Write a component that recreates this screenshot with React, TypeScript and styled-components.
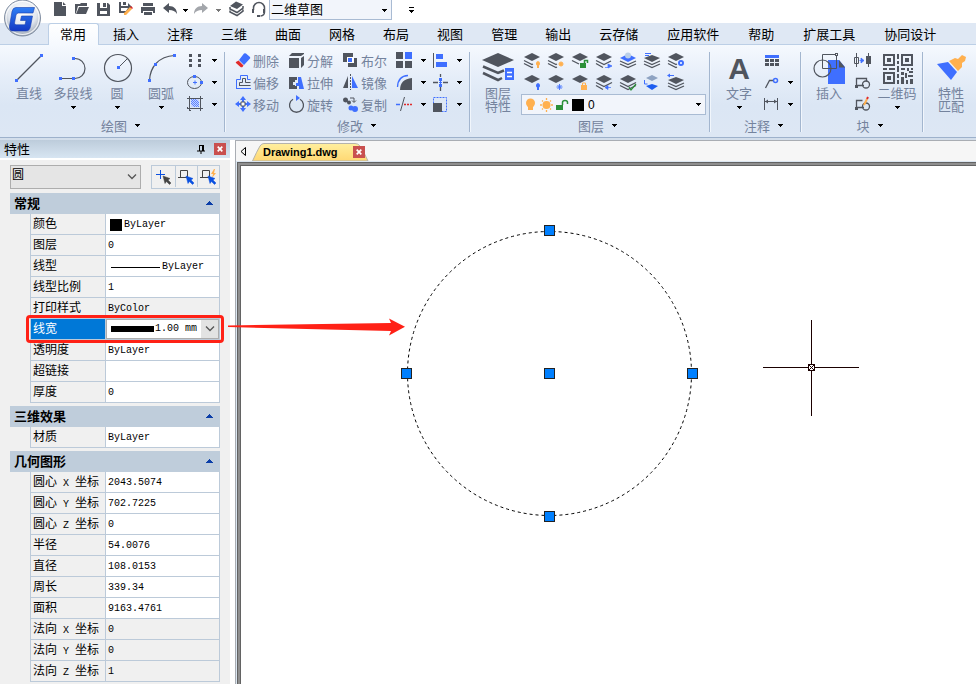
import React from "react";
import styled, { createGlobalStyle, css } from "styled-components";

const INK = "#50555e";
const BLUE = "#3f6fff";
const ORANGE = "#ffb04f";
const RED = "#e02b2b";
const GREEN = "#2b9038";
const CJK = `"Noto Sans CJK SC", sans-serif`;

const GlobalStyle = createGlobalStyle`
  * { box-sizing: border-box; }
  body { margin: 0; background: #fff; font-family: ${CJK}; font-size: 13px; color: #000; }
  button, select { font: inherit; color: inherit; margin: 0; padding: 0; }
  svg { display: block; flex: none; }
`;

/* ---------- page ---------- */

const Page = styled.div`
  display: flex;
  flex-direction: column;
  min-height: 100vh;
  position: relative;
  overflow: hidden;
`;

const PlainButton = styled.button`
  border: 0;
  background: none;
  display: flex;
  align-items: center;
  justify-content: center;
`;

const LogoButton = styled(PlainButton)`
  position: absolute;
  left: 2px;
  top: -2px;
  z-index: 2;
`;

/* ---------- quick access bar ---------- */

const QuickBar = styled.div`
  display: flex;
  align-items: flex-start;
  height: 23px;
  padding-left: 49px;
  background: #fff;
`;

const QuickButton = styled(PlainButton)<{ $w: number }>`
  width: ${(p) => p.$w}px;
  height: 20px;
`;

const Picker = styled.div<{ $w?: number }>`
  position: relative;
  display: flex;
  align-items: center;
  width: ${(p) => (p.$w ? `${p.$w}px` : "auto")};
`;

const PickerArrow = styled.span<{ $right: number }>`
  position: absolute;
  right: ${(p) => p.$right}px;
  top: 0;
  bottom: 0;
  display: flex;
  align-items: center;
  pointer-events: none;
`;

const WorkspaceSelect = styled.select`
  appearance: none;
  width: 100%;
  height: 20px;
  padding: 0 0 2px 1px;
  border: 1px solid #a9bbd3;
  border-top: 0;
  border-radius: 0;
  background: #f2f5fb;
  line-height: 17px;
`;

/* ---------- tabs ---------- */

const TabBar = styled.nav`
  display: flex;
  align-items: flex-end;
  height: 22px;
  padding-left: 46px;
  background: #dfe8f4;
  border-bottom: 1px solid #bccfe6;
`;

const Tab = styled.button<{ $active?: boolean; $wide?: boolean }>`
  flex: none;
  height: 21px;
  border: 0;
  background: none;
  padding: 0 ${(p) => (p.$wide ? 15 : 14)}px 0 14px;
  line-height: 20px;
  white-space: nowrap;
  ${(p) =>
    p.$active &&
    css`
      height: 22px;
      margin: 0 0 -1px 2px;
      padding: 0 12px 2px 11px;
      background: linear-gradient(#ffffff, #f5f9fe);
      border: 1px solid #bccfe6;
      border-bottom: 0;
      border-radius: 3px 3px 0 0;
      line-height: 18px;
    `}
`;

/* ---------- ribbon ---------- */

const Ribbon = styled.div`
  display: flex;
  align-items: stretch;
  padding-top: 4px;
  background: linear-gradient(#f5f9fe 0, #e6eef9 30px, #dbe6f4 60px, #dde7f4 100%);
  border-bottom: 1px solid #9db1cb;
  box-shadow: 0 2px 0 #d3deeb;
  margin-bottom: 2px;
`;

const Group = styled.section<{ $l: number; $r: number }>`
  flex: none;
  display: flex;
  flex-direction: column;
  padding: 0 ${(p) => p.$r}px 0 ${(p) => p.$l}px;
`;

const GroupBody = styled.div`
  display: flex;
  height: 66px;
`;

const GroupLabel = styled.button`
  display: flex;
  align-items: center;
  justify-content: center;
  gap: 8px;
  height: 22px;
  padding: 0 0 2px 13px;
  border: 0;
  background: none;
  color: #74839d;
  white-space: nowrap;
`;

const Separator = styled.div`
  flex: none;
  width: 2px;
  margin: 3px 0 5px;
  border-left: 1px solid #a3b6cf;
  border-right: 1px solid #f1f6fc;
`;

const Big = styled.button`
  width: 44px;
  height: 66px;
  border: 0;
  background: none;
  display: flex;
  flex-direction: column;
  align-items: center;
  color: #74839d;
`;

const BigLabel = styled.span<{ $wrap?: boolean }>`
  line-height: 13px;
  white-space: ${(p) => (p.$wrap ? "normal" : "nowrap")};
  max-width: ${(p) => (p.$wrap ? "2em" : "none")};
`;

const ArrowSlot = styled.span`
  display: flex;
  align-items: center;
  height: 17px;
`;

const Column = styled.div`
  display: flex;
  flex-direction: column;
`;

const Row = styled.div`
  display: flex;
  height: 22px;
`;

const Tool = styled(PlainButton)<{ $w: number }>`
  width: ${(p) => p.$w}px;
  height: 22px;
`;

const TextTool = styled.button`
  width: 54px;
  height: 22px;
  border: 0;
  background: none;
  display: flex;
  align-items: center;
  gap: 1px;
  color: #74839d;
  white-space: nowrap;
`;

const LayerBox = styled.div`
  position: relative;
  display: flex;
  align-items: center;
  height: 21px;
  margin: 1px 0 0 1px;
  width: 185px;
  padding-left: 3px;
  border: 1px solid #a9bbd3;
  background: #f2f5fb;
`;

const LayerSelect = styled.select`
  appearance: none;
  flex: 1;
  height: 19px;
  border: 0;
  background: none;
  font-family: "Liberation Sans", sans-serif;
  font-size: 12px;
`;

/* ---------- work area ---------- */

const Work = styled.div`
  flex: 1;
  display: flex;
`;

const Panel = styled.aside`
  position: relative;
  z-index: 1;
  flex: none;
  width: 230px;
  background: #f0f0f0;
`;

const PanelTitle = styled.header`
  display: flex;
  align-items: center;
  height: 18px;
  padding: 0 4px;
  background: linear-gradient(#bdccdb, #d7e5f2);
  box-shadow: 0 2px 0 #fff;
`;

const PanelName = styled.h2`
  flex: 1;
  margin: 0;
  font-size: 13px;
  font-weight: 400;
  line-height: 18px;
`;

const PinButton = styled(PlainButton)`
  width: 12px;
  height: 12px;
  margin-right: 7px;
`;

const CloseButton = styled(PlainButton)`
  width: 12px;
  height: 12px;
  background: #c9504f;
`;

const PanelTools = styled.div`
  display: flex;
  justify-content: space-between;
  padding: 7px 10px 4px;
`;

const ObjectSelect = styled.select`
  appearance: none;
  width: 100%;
  height: 24px;
  padding: 0 0 6px 1px;
  border: 1px solid #adadad;
  border-radius: 0;
  background: #e5e5e5;
  font-size: 12px;
  line-height: 16px;
`;

const ToolStrip = styled.div`
  display: flex;
  border: 1px solid #bccad9;
`;

const StripButton = styled(PlainButton)`
  width: 23px;
  height: 21px;
  & + & {
    border-left: 1px solid #bccad9;
    width: 22px;
  }
`;

const Section = styled.section`
  margin: 0 10px 3px;
`;

const SectionHead = styled.button`
  display: flex;
  align-items: center;
  justify-content: space-between;
  width: 100%;
  height: 21px;
  padding: 0 7px 2px 4px;
  border: 0;
  background: #bfcddb;
  font-weight: 700;
`;

const Grid = styled.table`
  width: calc(100% - 20px);
  margin-left: 20px;
  border-collapse: separate;
  border-spacing: 0;
  table-layout: fixed;
  font-size: 12px;
  line-height: 18px;
`;

const Name = styled.th<{ $selected?: boolean }>`
  position: relative;
  width: 76px;
  height: 21px;
  padding: 0 0 2px 2px;
  border: solid #bccad9;
  border-width: 0 1px 1px;
  text-align: left;
  font-weight: 400;
  white-space: nowrap;
  color: ${(p) => (p.$selected ? "#fff" : "#000")};
  background: ${(p) => (p.$selected ? "#0078d7" : "#f0f0f0")};
`;

const Axis = styled.span`
  font: 10px "Liberation Mono", monospace;
  white-space: pre;
`;

const Value = styled.td<{ $muted?: boolean; $flush?: boolean }>`
  height: 21px;
  padding: ${(p) => (p.$flush ? "0" : "2px 0 0 2px")};
  border: solid #bccad9;
  border-width: 0 1px 1px 0;
  background: ${(p) => (p.$muted ? "#f0f0f0" : "#fff")};
  font-family: "Liberation Mono", monospace;
  font-size: 10px;
`;

const Sample = styled.span`
  display: flex;
  align-items: center;
  gap: 2px;
  height: 18px;
`;

const Swatch = styled.span`
  width: 12px;
  height: 12px;
  margin-left: 2px;
  background: #000;
`;

const ThinLine = styled.span`
  width: 49px;
  height: 1px;
  margin-left: 3px;
  background: #000;
`;

const WeightBox = styled.div`
  position: relative;
  display: flex;
  align-items: center;
  height: 20px;
  padding-left: 4px;
  border: 1px solid #adadad;
  background: linear-gradient(to right, #fff 94px, #e3e3e3 94px);
`;

const WeightBar = styled.span`
  width: 43px;
  height: 6px;
  background: #000;
`;

const WeightSelect = styled.select`
  appearance: none;
  flex: 1;
  min-width: 0;
  height: 18px;
  padding-left: 1px;
  border: 0;
  background: none;
`;

const Callout = styled.span`
  position: absolute;
  left: -5px;
  top: -4px;
  width: 198px;
  height: 28px;
  border: 3px solid #ff2116;
  border-radius: 4px;
  pointer-events: none;
  z-index: 1;
`;

const CalloutArrow = styled.svg`
  position: absolute;
  left: 197px;
  top: -2px;
  pointer-events: none;
`;

/* ---------- document ---------- */

const Doc = styled.main`
  flex: 1;
  min-width: 0;
  display: flex;
  flex-direction: column;
  margin-left: 5px;
  border: solid #a9adb3;
  border-width: 1px 0 0 1px;
  background: #dbe6f1;
`;

const DocTabs = styled.div`
  display: flex;
  align-items: flex-end;
  height: 20px;
  padding-left: 2px;
  background: #f6f6f6;
`;

const DocTab = styled.div`
  position: relative;
  display: flex;
  align-items: center;
  width: 117px;
  height: 18px;
  margin-left: 4px;
  padding: 0 4px 0 11px;
`;

const DocTabShape = styled.svg`
  position: absolute;
  inset: 0;
`;

const DocName = styled.button`
  position: relative;
  flex: 1;
  padding-bottom: 1px;
  border: 0;
  background: none;
  text-align: left;
  font-family: "Liberation Sans", sans-serif;
  font-size: 11px;
  font-weight: 700;
`;

const DocClose = styled(CloseButton)`
  position: relative;
`;

const CanvasFrame = styled.div`
  flex: 1;
  display: flex;
  margin: 1px 0 0 1px;
  border: solid #636363;
  border-width: 1px 0 0 1px;
  box-shadow: inset 2px 2px 0 #8f8f8f, inset 3px 3px 0 #636363;
  padding: 3px 0 0 3px;
`;

const Canvas = styled.div`
  flex: 1;
  position: relative;
  overflow: hidden;
  background: #fff;
`;

const Drawing = styled.svg`
  position: absolute;
  left: 0;
  top: 0;
`;

/* ---------- shared glyphs ---------- */

const Caret = ({ color = "#000" }: { color?: string }) => (
  <svg width="5" height="3" viewBox="0 0 5 3">
    <path d="M0 0h5v1H4v1H3v1H2V2H1V1H0z" fill={color} />
  </svg>
);

const Chevron = () => (
  <svg width="10" height="6" viewBox="0 0 10 6">
    <path d="M1 .5l4 4 4-4" fill="none" stroke="#555" strokeWidth="1.3" />
  </svg>
);

const Cross = () => (
  <svg width="6" height="6" viewBox="0 0 6 6">
    <path d="M.7.7l4.6 4.6M5.3.7L.7 5.3" stroke="#fff" strokeWidth="1.7" />
  </svg>
);

const Sq = ({ x, y }: { x: number; y: number }) => <rect x={x - 1.5} y={y - 1.5} width="3" height="3" fill={BLUE} stroke="none" />;

const Art = ({ w, h, children }: { w: number; h: number; children: React.ReactNode }) => (
  <svg width={w} height={h} viewBox={`0 0 ${w} ${h}`} fill="none" stroke={INK} aria-hidden="true">
    {children}
  </svg>
);

const Logo = () => (
  <svg width="40" height="40" viewBox="0 0 40 40">
    <defs>
      <radialGradient id="ball" cx="50%" cy="35%" r="65%">
        <stop offset="0" stopColor="#fff" />
        <stop offset="0.6" stopColor="#e3e8ef" />
        <stop offset="1" stopColor="#98a3b3" />
      </radialGradient>
      <linearGradient id="gee" x1="0" y1="0" x2="0" y2="1">
        <stop offset="0" stopColor="#2f7ff5" />
        <stop offset="1" stopColor="#1439c4" />
      </linearGradient>
    </defs>
    <circle cx="20.5" cy="20" r="18" fill="url(#ball)" stroke="#8390a3" />
    <circle cx="20.5" cy="20" r="16.5" fill="none" stroke="#fff" strokeWidth="1.2" opacity="0.8" />
    <path
      d="M14 9.500H32.500L31 15H16.500Q14.500 15 14 17L12.500 25Q12.500 26.800 14 26.800H23L24 22.500H18.500L19.500 18H30.500L28.500 28.500Q27.500 33 24 33H10.500Q7 33 7.500 28L10 13.500Q11 9.500 14 9.500Z"
      fill="url(#gee)"
      stroke="#1a3fae"
      strokeWidth="0.6"
    />
  </svg>
);

/* ---------- quick access glyphs (20 x 20) ---------- */

const stack = (
  <>
    <path d="M4 6l6-4.500 7 3-6 4.500z" fill={INK} stroke="none" />
    <path d="M4 7v2l7 3.500 6-4.500v-2M4 10.500v1.500l7 3.500 6-4.500v-1.500" strokeWidth="1.500" />
  </>
);

const quick: [string, number, React.ReactNode][] = [
  ["新建", 22, <path d="M4 2h8v4h4v10H4zM13 2l3 3h-3z" fill={INK} stroke="none" />],
  [
    "打开",
    22,
    <g fill={INK} stroke="none">
      <path d="M3 14V4h5l1-1h6v3H6L4 13z" />
      <path d="M7 7h10l-3 7H4z" />
    </g>,
  ],
  ["保存", 22, <path d="M3 3h3v5h7V3h1l2 2v11H3zM9 3h3v4H9zM6 11v3h7v-3z" fill={INK} fillRule="evenodd" stroke="none" />],
  [
    "另存为",
    22,
    <g stroke="none">
      <path d="M3 2h2v4h7V3l4 4-6 6H3zM7 2h3v3H7zM5 8v3h5l2-3z" fill={INK} fillRule="evenodd" />
      <path d="M8 13l6-6 2 2-6 6H8z" fill={ORANGE} />
      <path d="M14 7l1-1 2 2-1 1z" fill={RED} />
    </g>,
  ],
  ["打印", 22, <path d="M5 3h10v3H5zM3 7h14v6h-2v-2H5v2H3zM6 12h8v3H6z" fill={INK} stroke="none" />],
  ["撤销", 22, <path d="M3 8l6-5v3c5 0 8 3 8 8-2-3-4-4-8-4v3z" fill={INK} stroke="none" />],
];

/* ---------- small ribbon glyphs ---------- */

const drawTools: [string, React.ReactNode][] = [
  [
    "点",
    <path d="M6 5h3v3H6zM15 5h3v3h-3zM6 10h3v3H6zM15 10h3v3h-3zM6 15h3v3H6zM15 15h3v3h-3z" fill={INK} stroke="none" />,
  ],
  [
    "椭圆",
    <>
      <ellipse cx="11.500" cy="11.500" rx="7" ry="6" />
      <path d="M10 11.500h4M12 9.500v4" stroke={BLUE} />
      <Sq x={11.5} y={5.5} />
      <Sq x={18.5} y={11.5} />
    </>,
  ],
  [
    "填充",
    <>
      <rect x="8" y="6" width="8" height="8" fill="#c5d3ff" stroke="none" />
      <path d="M8 10l4 4M8 6l8 8M12 6l4 4M8 8l6 6M10 6l6 6" stroke={BLUE} strokeWidth="0.8" />
      <path d="M6.500 3v15M17.500 3v15M4 5.500h16M4 15.500h16M4 14l4 4" />
    </>,
  ],
];

const modify: [string, React.ReactNode][][] = [
  [
    [
      "删除",
      <g stroke="none">
        <path d="M12 4.500Q13 4 14 4.500L18 8Q18.500 9 18 9.500L12 16 7 11z" fill={BLUE} />
        <path d="M6.500 11.500l5 5-1 1.500Q9.500 18.500 8.500 18L4 14Q3.500 13.500 4 13z" fill={RED} />
      </g>,
    ],
    [
      "偏移",
      <>
        <path d="M4 17.500h15M4.500 17.500V8.500h4v-4h7v4h3" stroke={BLUE} />
        <path d="M7 14.500h11.500M7.500 14.500v-3h3v-4h3v4h5" />
      </>,
    ],
    [
      "移动",
      <g stroke="none">
        <path d="M11 3l3 4h-2v3h-2V7H8zM11 19l-3-4h2v-3h2v3h2zM3 11l4-3v2h3v2H7v2zM19 11l-4 3v-2h-3v-2h3V8z" fill={BLUE} />
        <path d="M9 9h4v4H9z" fill="#fff" stroke={INK} />
      </g>,
    ],
  ],
  [
    [
      "分解",
      <path d="M3 7l3-3h12v1l-3 2zM3 9h10v10H3zM15 9l3-2v9l-3 3z" fill={INK} stroke="none" />,
    ],
    [
      "拉伸",
      <g stroke="none">
        <path d="M3 6h8v3H9v2H7v3h2v1h2v3H3z" fill={INK} />
        <path d="M12 6h3l3 12h-5v-3h-3v-3h2z" fill={BLUE} />
      </g>,
    ],
    [
      "旋转",
      <>
        <path d="M7 6.200a7 7 0 1 0 7 0" strokeWidth="1.300" />
        <path d="M10 2l4 3-4 3z" fill={BLUE} stroke="none" />
      </>,
    ],
  ],
  [
    [
      "布尔",
      <g stroke="none">
        <path d="M3 4h10v9H3zM8 9h9v9H8z" fill={INK} />
        <path d="M7 8h7v6H7z" fill="#fff" />
        <path d="M8 9h4v4H8z" fill={BLUE} />
      </g>,
    ],
    [
      "镜像",
      <g>
        <path d="M8 5v12H3z" fill={INK} stroke="none" />
        <path d="M12 5v12h6z" fill={BLUE} stroke="none" />
        <path d="M10.500 3v16" strokeDasharray="2 1" />
      </g>,
    ],
    [
      "复制",
      <g>
        <path d="M5.500 4.500a2.500 2.500 0 1 1 0 5 2.500 2.500 0 0 1 0-5zM9 7.500a2 2 0 1 1 0 4 2 2 0 0 1 0-4z" fill={INK} stroke="none" />
        <path d="M10 5h4v4M12 7.500l2 2 2-2" />
        <path d="M11 12.500a2.500 2.500 0 1 1 0 5 2.500 2.500 0 0 1 0-5zM15 13a3 3 0 1 1 0 6 3 3 0 0 1 0-6z" fill={BLUE} stroke="none" />
      </g>,
    ],
  ],
];

const modifyExtra: [string, React.ReactNode][][] = [
  [
    [
      "阵列",
      <g stroke="none">
        <path d="M2 3h7v7H2zM2 12h7v7H2zM11 12h7v7h-7z" fill={INK} />
        <path d="M11 3h7v7h-7z" fill={BLUE} />
      </g>,
    ],
    [
      "圆角",
      <>
        <path d="M18 7v12H6Q6 8 18 7z" fill={INK} stroke="none" />
        <path d="M3.500 16Q4 5 14 4.500" stroke={BLUE} strokeWidth="1.300" />
      </>,
    ],
    [
      "修剪",
      <>
        <path d="M10.500 4L6.500 18" />
        <path d="M2 11.500h4" stroke={BLUE} strokeWidth="1.500" />
        <path d="M10 11.500h9" stroke={RED} strokeWidth="1.500" strokeDasharray="2 1" />
      </>,
    ],
  ],
  [
    [
      "对齐",
      <g stroke="none">
        <path d="M2 4h1v15H2z" fill={INK} />
        <path d="M5 5h7v5H5zM5 13h11v5H5z" fill={BLUE} />
      </g>,
    ],
    [
      "打断",
      <>
        <path d="M9.500 3v3M9.500 16v4M2 11.500h5M12 11.500h5" strokeWidth="1.300" />
        <path d="M9.500 7v3M9.500 13v3" strokeWidth="3" stroke={BLUE} />
        <path d="M8 11.500h3M9.500 10v3" stroke={BLUE} />
      </>,
    ],
    [
      "缩放",
      <>
        <path d="M2.500 4.500h13v14h-13z" stroke={BLUE} strokeDasharray="2 1" />
        <path d="M2 10h9v9H2z" fill={INK} stroke="none" />
      </>,
    ],
  ],
];

/* ---------- layer glyphs (24 x 22) ---------- */

const diamond = <path d="M4 8l8-4 8 4-8 4z" fill={INK} stroke="none" />;
const fullStack = (
  <>
    {diamond}
    <path d="M4 11.500l8 4 8-4M4 14.500l8 4 8-4" strokeWidth="1.300" />
  </>
);
const halfStack = (
  <>
    {diamond}
    <path d="M4 11.500l8 4 1-.5M4 14.500l8 4 1-.5" strokeWidth="1.300" />
  </>
);
const Bulb = ({ c }: { c: string }) => <path d="M18 12a2.500 2.500 0 0 1 1 4.500V19h-2v-2.500a2.500 2.500 0 0 1 1-4.500z" fill={c} stroke="none" />;

const layerTools: [string, React.ReactNode][] = [
  ["图层关闭", <>{halfStack}<Bulb c={ORANGE} /></>],
  [
    "图层冻结",
    <>
      {halfStack}
      <circle cx="17" cy="15" r="2" fill={ORANGE} stroke="none" />
      <path d="M17 12v6M14 15h6M15 13l4 4M19 13l-4 4" stroke={ORANGE} strokeWidth="0.700" />
    </>,
  ],
  [
    "图层解锁",
    <>
      {diamond}
      <path d="M12 14h6v5h-6z" fill={GREEN} stroke="none" />
      <path d="M4 11.500l7 3.500" strokeWidth="1.300" />
      <path d="M16.500 14v-2.500h3V14" stroke={GREEN} strokeWidth="1.500" />
    </>,
  ],
  [
    "图层转换",
    <>
      {diamond}
      <path d="M4 11.500l8 4 7-3.500M4 14.500l7 4" strokeWidth="1.300" />
      <path d="M13 18.500h3M16 15l4 2-4 2z" fill={BLUE} stroke={BLUE} strokeWidth="0.700" />
    </>,
  ],
  [
    "图层隔离",
    <>
      <path d="M4 9l8-4 8 4-8 4z" fill={BLUE} stroke="none" />
      <circle cx="12" cy="6.500" r="3" fill="#b9cfe9" stroke="none" />
      <path d="M4 12l8 3.500 8-3.500M4 15l8 3.500 8-3.500" strokeWidth="1.300" />
    </>,
  ],
  [
    "图层合并",
    <>
      <path d="M4 9l8-3 8 3-8 4z" fill={INK} stroke="none" />
      <path d="M4 12l8 3.500 8-3.500M4 15l8 3.500 8-3.500" strokeWidth="1.300" />
      <path d="M5 4.500h6M5 6.500h4" stroke={BLUE} />
    </>,
  ],
  [
    "图层设置",
    <>
      {halfStack}
      <circle cx="17" cy="14" r="2" stroke={BLUE} strokeWidth="2" fill="#fff" />
    </>,
  ],
  ["打开图层", <>{diamond}<Bulb c={BLUE} /></>],
  ["解冻图层", <>{diamond}<path d="M15.500 13v6M12.500 16h6M13.500 14l4 4M17.500 14l-4 4" stroke={BLUE} strokeWidth="0.900" /></>],
  [
    "锁定图层",
    <>
      {diamond}
      <path d="M13 14h6v5h-6z" fill={ORANGE} stroke="none" />
      <path d="M14.500 14v-2h3v2" stroke={ORANGE} />
    </>,
  ],
  [
    "上一图层",
    <>
      {diamond}
      <path d="M4 11.500l8 4 8-4M4 14.500l7 4" strokeWidth="1.300" />
      <path d="M19 16.500h-4M16 14.500l-3 2 3 2z" fill={BLUE} stroke={BLUE} strokeWidth="0.700" />
    </>,
  ],
  [
    "图层匹配",
    <>
      {fullStack}
      <path d="M13 16l2 3 5-6" stroke={GREEN} strokeWidth="1.300" />
    </>,
  ],
  [
    "移至图层",
    <>
      <path d="M6 7l6-3 6 3-6 3z" fill="#8ea3c2" stroke="none" />
      <path d="M6 15l6-2 6 2-6 4z" fill="#1d5df0" stroke="none" />
      <path d="M4.500 9v4h3" stroke={BLUE} />
    </>,
  ],
  [
    "删除图层",
    <>
      <path d="M4 9l8-3 8 3-8 4z" fill={INK} stroke="none" />
      <path d="M4 12l8 3.500 8-3.500M4 15l8 3.500 8-3.500" strokeWidth="1.300" />
      <path d="M4 4.500h6" stroke={BLUE} />
      <path d="M6 2.500l-3 2 3 2z" fill={BLUE} stroke="none" />
    </>,
  ],
];

const noteTools: [string, React.ReactNode, boolean][] = [
  [
    "表格",
    <g stroke="none">
      <path d="M4 6h14v3H4z" fill={BLUE} />
      <path d="M4 10h4v3H4zM9 10h4v3H9zM14 10h4v3h-4zM4 14h4v3H4zM9 14h4v3H9zM14 14h4v3h-4z" fill={INK} />
    </g>,
    false,
  ],
  [
    "引线",
    <>
      <path d="M4.500 17L8.500 9.500H13" strokeWidth="1.300" />
      <circle cx="14.500" cy="9.500" r="2" stroke={BLUE} strokeWidth="1.500" />
    </>,
    true,
  ],
  [
    "标注",
    <>
      <path d="M3.500 5v12M16.500 5v12M4 8.500h12" />
      <path d="M7 6.500v4l-3-2zM13 6.500v4l3-2z" fill={INK} stroke="none" />
    </>,
    true,
  ],
];

const blockTools: [string, React.ReactNode][] = [
  [
    "属性",
    <>
      <path d="M5.500 4v14M17.500 4v14" />
      <path d="M3.500 8.500h4v6h-4z" />
      <path d="M15 7h5v8h-5z" fill={INK} stroke="none" />
      <path d="M8.500 11.500h4M10 9l3 2.500-3 2.500z" stroke={BLUE} strokeWidth="0.800" fill={BLUE} />
    </>,
  ],
  [
    "创建块",
    <>
      <path d="M13 14.500H5.500v-7h10v3" strokeWidth="1.300" />
      <circle cx="15" cy="13.500" r="3.500" strokeWidth="1.300" />
      <path d="M4 14h3v3H4z" fill={INK} stroke="none" />
    </>,
  ],
  [
    "编辑块",
    <>
      <path d="M13 14.500H5.500v-7h6" strokeWidth="1.300" />
      <circle cx="15" cy="13.500" r="3.500" strokeWidth="1.300" />
      <path d="M4 14h3v3H4z" fill={INK} stroke="none" />
      <path d="M13 12l3-6" stroke={ORANGE} strokeWidth="2" />
      <path d="M16 6l1-2" stroke={RED} strokeWidth="2" />
    </>,
  ],
];

/* ---------- large ribbon tools ---------- */

type BigToolProps = { label: string; wrap?: boolean; arrow?: boolean; children: React.ReactNode };

const BigTool = ({ label, wrap, arrow, children }: BigToolProps) => (
  <Big>
    <Art w={44} h={37}>
      {children}
    </Art>
    <BigLabel $wrap={wrap}>{label}</BigLabel>
    {arrow && (
      <ArrowSlot>
        <Caret />
      </ArrowSlot>
    )}
  </Big>
);

const Finder = ({ x, y }: { x: number; y: number }) => (
  <g>
    <rect x={x + 1} y={y + 1} width="10" height="10" strokeWidth="2" />
    <rect x={x + 4} y={y + 4} width="4" height="4" fill={INK} stroke="none" />
  </g>
);

const Draw = () => (
  <Group $l={7} $r={3}>
    <GroupBody>
      <BigTool label="直线">
        <path d="M9.500 31.500l25-25" strokeWidth="1.200" />
        <Sq x={9.5} y={31.5} />
        <Sq x={34.5} y={6.5} />
      </BigTool>
      <BigTool label="多段线" arrow>
        <path d="M9.500 29.500H24a10 10 0 0 0 0-20h-1.500" strokeWidth="1.200" />
        <Sq x={9.5} y={29.5} />
        <Sq x={22.5} y={29.5} />
        <Sq x={22.5} y={9.5} />
      </BigTool>
      <BigTool label="圆" arrow>
        <circle cx="23" cy="19" r="13.500" strokeWidth="1.200" />
        <path d="M23 19l9-9" />
        <Sq x={23.5} y={18.5} />
      </BigTool>
      <BigTool label="圆弧" arrow>
        <path d="M10.500 31.500Q11 21 17 14.500 24 7 35.500 6.500" strokeWidth="1.200" />
        <Sq x={10.5} y={31.5} />
        <Sq x={16.5} y={15.5} />
        <Sq x={35.5} y={6.5} />
      </BigTool>
      <Column>
        {drawTools.map(([name, art]) => (
          <Row key={name}>
            <Tool $w={24} aria-label={name}>
              <Art w={24} h={22}>{art}</Art>
            </Tool>
            <Tool $w={14} aria-label={`${name}选项`}>
              <Caret />
            </Tool>
          </Row>
        ))}
      </Column>
    </GroupBody>
    <GroupLabel>绘图<Caret /></GroupLabel>
  </Group>
);

const Modify = () => (
  <Group $l={6} $r={1}>
    <GroupBody>
      {modify.map((col, i) => (
        <Column key={i}>
          {col.map(([name, art]) => (
            <TextTool key={name}>
              <Art w={20} h={22}>{art}</Art>
              {name}
            </TextTool>
          ))}
        </Column>
      ))}
      {modifyExtra.map((col, i) => (
        <Column key={i}>
          {col.map(([name, art]) => (
            <Row key={name}>
              <Tool $w={i === 0 ? 20 : 18} aria-label={name}>
                <Art w={20} h={22}>{art}</Art>
              </Tool>
              <Tool $w={18} aria-label={`${name}选项`}>
                <Caret />
              </Tool>
            </Row>
          ))}
        </Column>
      ))}
    </GroupBody>
    <GroupLabel>修改<Caret /></GroupLabel>
  </Group>
);

const Layers = () => (
  <Group $l={5} $r={3}>
    <GroupBody>
      <BigTool label="图层特性" wrap>
        <path d="M6 11l16-7 16 7-16 7z" fill={INK} stroke="none" />
        <path d="M7 17.500l15 6.500 6-2.500M7 24l15 7 4-2" strokeWidth="2.500" />
        <path d="M29 19h9v12h-9z" fill={BLUE} stroke="none" />
        <path d="M31 23.500h5M31 27.500h5" stroke="#fff" strokeWidth="1.500" />
      </BigTool>
      <Column>
        {[layerTools.slice(0, 7), layerTools.slice(7)].map((row, i) => (
          <Row key={i}>
            {row.map(([name, art]) => (
              <Tool key={name} $w={24} aria-label={name}>
                <Art w={24} h={22}>{art}</Art>
              </Tool>
            ))}
          </Row>
        ))}
        <LayerBox>
          <Art w={63} h={19}>
            <g stroke="none">
              <circle cx="5.500" cy="8" r="4.500" fill={ORANGE} />
              <path d="M3 11h5v4H3z" fill={ORANGE} />
              <circle cx="21.500" cy="10" r="4" fill={ORANGE} />
              <path d="M31 10h7v5h-7z" fill={GREEN} />
              <path d="M47 4h12v12H47z" fill="#000" />
            </g>
            <path d="M21.500 3v2M21.500 15v2M15 10h2M26 10h2M17 5.500l1 1M25 13.500l1 1M26 5.500l-1 1M18 13.500l-1 1" stroke={ORANGE} strokeWidth="1.300" />
            <path d="M37.500 10V7.500q0-2 2.500-2t2.500 2V9" stroke={GREEN} strokeWidth="1.500" />
          </Art>
          <LayerSelect aria-label="当前图层">
            <option>0</option>
          </LayerSelect>
          <PickerArrow $right={4}>
            <Caret />
          </PickerArrow>
        </LayerBox>
      </Column>
    </GroupBody>
    <GroupLabel>图层<Caret /></GroupLabel>
  </Group>
);

const Notes = () => (
  <Group $l={6} $r={3}>
    <GroupBody>
      <BigTool label="文字" arrow>
        <text x="22" y="30" textAnchor="middle" fontFamily="Liberation Sans" fontWeight="700" fontSize="30" fill={INK} stroke="none">
          A
        </text>
      </BigTool>
      <Column>
        {noteTools.map(([name, art, arrow]) => (
          <Row key={name}>
            <Tool $w={22} aria-label={name}>
              <Art w={22} h={22}>{art}</Art>
            </Tool>
            {arrow && (
              <Tool $w={14} aria-label={`${name}选项`}>
                <Caret />
              </Tool>
            )}
          </Row>
        ))}
      </Column>
    </GroupBody>
    <GroupLabel>注释<Caret /></GroupLabel>
  </Group>
);

const Blocks = () => (
  <Group $l={5} $r={3}>
    <GroupBody>
      <BigTool label="插入">
        <path d="M21 11h11l6 7v17H21z" fill={BLUE} stroke="none" />
        <path d="M32 11l6 7.500h-6z" fill={INK} stroke="none" />
        <circle cx="15.500" cy="19.500" r="8.500" strokeWidth="1.200" />
        <path d="M15.500 5.500h14v14h-14z" />
        <rect x="28.500" y="4.500" width="2" height="2" fill="#fff" />
      </BigTool>
      <Column>
        {blockTools.map(([name, art]) => (
          <Tool key={name} $w={24} aria-label={name}>
            <Art w={24} h={22}>{art}</Art>
          </Tool>
        ))}
      </Column>
      <BigTool label="二维码" arrow>
        <Finder x={8} y={5} />
        <Finder x={26} y={5} />
        <Finder x={8} y={23} />
        <path
          d="M22 5h2v5h-2zM22 12h2v3h-2zM8 19h4v2H8zM14 19h6v2h-6zM22 17h2v6h-2zM26 19h4v2h-4zM32 19h2v3h-2zM36 19h2v2h-2zM22 25h2v4h-2zM22 31h2v4h-2zM26 23h3v3h-3zM30 24h2v5h-2zM34 22h4v2h-4zM33 26h5v2h-5zM26 28h3v7h-3zM31 31h2v4h-2zM35 30h3v5h-3z"
          fill={INK}
          stroke="none"
        />
      </BigTool>
    </GroupBody>
    <GroupLabel>块<Caret /></GroupLabel>
  </Group>
);

const Match = () => (
  <Group $l={5} $r={0}>
    <GroupBody>
      <BigTool label="特性匹配" wrap>
        <path d="M8 15l11-2 9 10-6 8z" fill={BLUE} stroke="none" />
        <path d="M20 12l6-3 3 1 4-4 4 2-1 4-3 2v4l-4 4z" fill={ORANGE} stroke="none" />
      </BigTool>
    </GroupBody>
  </Group>
);

/* ---------- properties ---------- */

type Prop = { name: React.ReactNode; value?: React.ReactNode; muted?: boolean; weight?: boolean };

const axis = (a: string, x: string): React.ReactNode => (
  <>
    {a}
    <Axis>{` ${x} `}</Axis>
    坐标
  </>
);

const sections: { title: string; rows: Prop[] }[] = [
  {
    title: "常规",
    rows: [
      { name: "颜色", value: <Sample><Swatch />ByLayer</Sample> },
      { name: "图层", value: "0" },
      { name: "线型", value: <Sample><ThinLine />ByLayer</Sample> },
      { name: "线型比例", value: "1" },
      { name: "打印样式", value: "ByColor", muted: true },
      { name: "线宽", weight: true },
      { name: "透明度", value: "ByLayer" },
      { name: "超链接" },
      { name: "厚度", value: "0" },
    ],
  },
  { title: "三维效果", rows: [{ name: "材质", value: "ByLayer" }] },
  {
    title: "几何图形",
    rows: [
      { name: axis("圆心", "X"), value: "2043.5074" },
      { name: axis("圆心", "Y"), value: "702.7225" },
      { name: axis("圆心", "Z"), value: "0" },
      { name: "半径", value: "54.0076" },
      { name: "直径", value: "108.0153" },
      { name: "周长", value: "339.34" },
      { name: "面积", value: "9163.4761" },
      { name: axis("法向", "X"), value: "0", muted: true },
      { name: axis("法向", "Y"), value: "0", muted: true },
      { name: axis("法向", "Z"), value: "1", muted: true },
    ],
  },
];

const WeightRow = () => (
  <tr>
    <Name scope="row" $selected>
      <label htmlFor="line-weight">线宽</label>
      <Callout />
      <CalloutArrow width="180" height="20" viewBox="0 0 180 20" aria-hidden="true">
        <path d="M0 8.500L163 6 161 1.500 177 9.800 161 18.500 163 14 0 10z" fill="#ff2116" />
      </CalloutArrow>
    </Name>
    <Value $flush>
      <WeightBox>
        <WeightBar />
        <WeightSelect id="line-weight">
          <option>1.00 mm</option>
        </WeightSelect>
        <PickerArrow $right={3}>
          <Chevron />
        </PickerArrow>
      </WeightBox>
    </Value>
  </tr>
);

const Pointer = ({ color }: { color: string }) => (
  <path d="M9 9l7 2.500-2 1.500 3 3-1.500 1.500-3-3-1.500 2z" fill={color} stroke={color} strokeWidth="0.500" />
);

const Properties = () => (
  <Panel>
    <PanelTitle>
      <PanelName>特性</PanelName>
      <PinButton aria-label="固定">
        <Art w={8} h={9}>
          <path d="M2 .5h4.500M2.500 0v6M5.500 0v6M6.500 0v6M0 6h8M4 6v3" stroke="#000" />
        </Art>
      </PinButton>
      <CloseButton aria-label="关闭">
        <Cross />
      </CloseButton>
    </PanelTitle>
    <PanelTools>
      <Picker $w={131}>
        <ObjectSelect aria-label="对象类型">
          <option>圆</option>
        </ObjectSelect>
        <PickerArrow $right={4}>
          <Chevron />
        </PickerArrow>
      </Picker>
      <ToolStrip>
        <StripButton aria-label="切换选择">
          <Art w={20} h={20}>
            <path d="M2 7.500h9M6.500 3v9" stroke="#0a50e0" />
            <Pointer color="#444" />
          </Art>
        </StripButton>
        <StripButton aria-label="选择对象">
          <Art w={20} h={20}>
            <path d="M3.500 3.500h7v7h-7zM1 10.500h3" stroke="#444" />
            <Pointer color="#0a50e0" />
          </Art>
        </StripButton>
        <StripButton aria-label="快速选择">
          <Art w={20} h={20}>
            <path d="M3.500 3.500h7v7h-7zM1 10.500h3" stroke="#444" />
            <path d="M15 2l-3 5h2l-1 4 4-5h-2l1-4z" fill={ORANGE} stroke="none" />
            <Pointer color="#0a50e0" />
          </Art>
        </StripButton>
      </ToolStrip>
    </PanelTools>
    {sections.map((s) => (
      <Section key={s.title}>
        <SectionHead>
          {s.title}
          <svg width="7" height="4" viewBox="0 0 7 4">
            <path d="M3 0h1v1h1v1h1v1h1v1H0V3h1V2h1V1h1z" fill="#0b3ea8" />
          </svg>
        </SectionHead>
        <Grid>
          <tbody>
            {s.rows.map((r, i) =>
              r.weight ? (
                <WeightRow key={i} />
              ) : (
                <tr key={i}>
                  <Name scope="row">{r.name}</Name>
                  <Value $muted={r.muted}>{r.value}</Value>
                </tr>
              )
            )}
          </tbody>
        </Grid>
      </Section>
    ))}
  </Panel>
);

/* ---------- document ---------- */

const grips = [
  [308, 64],
  [308, 207],
  [308, 350],
  [165, 207],
  [451, 207],
];

const Document = () => (
  <Doc>
    <DocTabs>
      <QuickButton $w={10} aria-label="上一个">
        <svg width="6" height="9" viewBox="0 0 6 9">
          <path d="M5.500.500v8l-4.500-4z" fill="none" stroke="#000" />
        </svg>
      </QuickButton>
      <DocTab>
        <DocTabShape width="117" height="18" viewBox="0 0 117 18">
          <defs>
            <linearGradient id="tab" x1="0" y1="0" x2="0" y2="1">
              <stop offset="0" stopColor="#ffef9e" />
              <stop offset="1" stopColor="#ffd873" />
            </linearGradient>
          </defs>
          <path d="M.5 18Q5 8 8 3 9.500.500 12 .500h91q3 0 5 2.500 4 6 8 15z" fill="url(#tab)" stroke="#b5b3ab" />
        </DocTabShape>
        <DocName>Drawing1.dwg</DocName>
        <DocClose aria-label="关闭图纸">
          <Cross />
        </DocClose>
      </DocTab>
    </DocTabs>
    <CanvasFrame>
      <Canvas>
        <Drawing width="735" height="518" viewBox="0 0 735 518" fill="none" stroke="#000" role="img" aria-label="圆">
          <circle cx="308.500" cy="207.500" r="142" strokeDasharray="3 3" />
          {grips.map(([x, y]) => (
            <rect key={`${x}-${y}`} x={x - 4.5} y={y - 4.5} width="10" height="10" fill="#0080ff" stroke="#222" />
          ))}
          <g stroke="#1a0000" shapeRendering="crispEdges">
            <path d="M522 201.500h45M574 201.500h44M570.500 154v44M570.500 205v45" />
            <rect x="567.500" y="198.500" width="6" height="6" />
            <path d="M568 199l5 5M573 199l-5 5" />
          </g>
        </Drawing>
      </Canvas>
    </CanvasFrame>
  </Doc>
);

const tabs = ["常用", "插入", "注释", "三维", "曲面", "网格", "布局", "视图", "管理", "输出", "云存储", "应用软件", "帮助", "扩展工具", "协同设计"];

export default function App() {
  return (
    <>
      <GlobalStyle />
      <Page>
        <LogoButton aria-label="应用程序菜单">
          <Logo />
        </LogoButton>
        <QuickBar>
          {quick.map(([name, w, art]) => (
            <QuickButton key={name} $w={w} aria-label={name}>
              <Art w={20} h={20}>{art}</Art>
            </QuickButton>
          ))}
          <QuickButton $w={9} aria-label="撤销列表">
            <Caret />
          </QuickButton>
          <QuickButton $w={22} aria-label="重做">
            <Art w={20} h={20}>
              <path d="M17 8l-6-5v3c-5 0-8 3-8 8 2-3 4-4 8-4v3z" fill="#a3a6ab" stroke="none" />
            </Art>
          </QuickButton>
          <QuickButton $w={12} aria-label="重做列表">
            <Caret color="#777" />
          </QuickButton>
          <QuickButton $w={24} aria-label="图层管理">
            <Art w={20} h={20}>{stack}</Art>
          </QuickButton>
          <QuickButton $w={21} aria-label="客服">
            <Art w={20} h={20}>
              <path d="M4.500 10V8a5.500 5.500 0 0 1 11 0v4q0 3.500-4 4" strokeWidth="1.500" />
              <path d="M3 9h2v4H3zM14 9h2v4h-2zM8 15h3v2H8z" fill={INK} stroke="none" />
            </Art>
          </QuickButton>
          <Picker $w={123}>
            <WorkspaceSelect aria-label="工作空间">
              <option>二维草图</option>
            </WorkspaceSelect>
            <PickerArrow $right={5}>
              <Caret />
            </PickerArrow>
          </Picker>
          <QuickButton $w={38} aria-label="自定义快速访问">
            <svg width="5" height="6" viewBox="0 0 5 6">
              <path d="M0 0h5v1H0zM0 3h5v1H4v1H3v1H2V5H1V4H0z" />
            </svg>
          </QuickButton>
        </QuickBar>
        <TabBar>
          {tabs.map((t, i) => (
            <Tab key={t} $active={i === 0} $wide={i === 0 || i > 9}>
              {t}
            </Tab>
          ))}
        </TabBar>
        <Ribbon>
          <Draw />
          <Separator />
          <Modify />
          <Separator />
          <Layers />
          <Separator />
          <Notes />
          <Separator />
          <Blocks />
          <Separator />
          <Match />
        </Ribbon>
        <Work>
          <Properties />
          <Document />
        </Work>
      </Page>
    </>
  );
}
